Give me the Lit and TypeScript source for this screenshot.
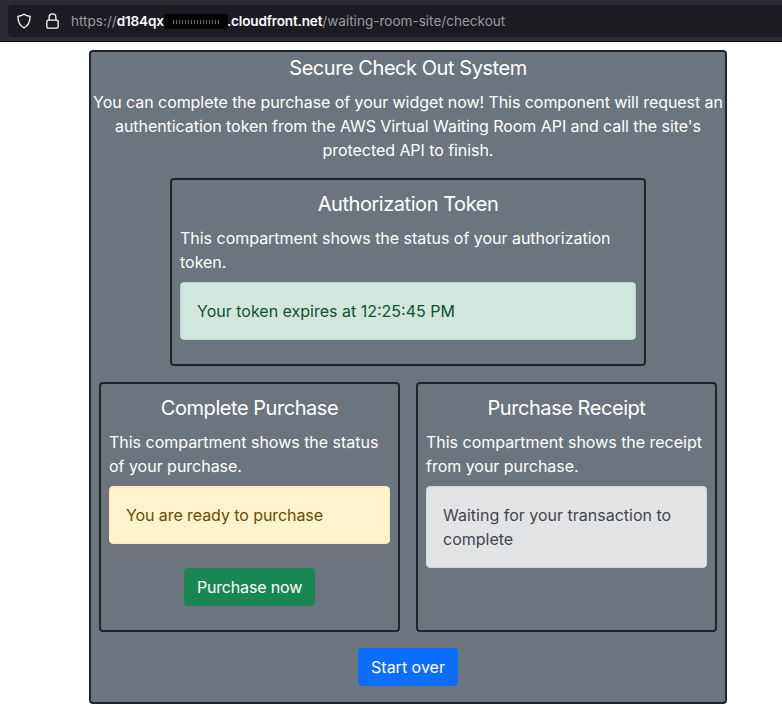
import { LitElement, html, css } from "lit";
import { customElement } from "lit/decorators.js";

@customElement("app-root")
export class AppRoot extends LitElement {
  static styles = css`
    :host { display: block; font-family: Inter, "Liberation Sans", sans-serif; font-size: 16px; line-height: 24px; color: #fff; background: #fff; min-height: 725px; }
    * { box-sizing: border-box; }
    .chrome { height: 42px; background: #2b2a33; border-bottom: 1px solid #0c0c0d; padding: 5px 0 4px 8px; }
    .urlbar { height: 32px; background: #1c1b22; border-radius: 4px 0 0 4px; display: flex; align-items: center; padding-left: 8px; color: #9a9aa0; font-size: 13.55px; }
    .urlbar svg { flex: none; }
    .lock { margin-left: 14px; margin-right: 12px; }
    .host { color: #fbfbfe; font-weight: 600; letter-spacing: -0.16px; }
    .redact { display: inline-block; width: 64px; height: 15px; margin-left: -4px; margin-right: -1px; border-radius: 3px; vertical-align: -3px; background: repeating-linear-gradient(90deg, #6a6a6a 0 1px, #0a0a0a 1px 3px) center / 46px 4px no-repeat, #050505; }
    .page { width: 638px; margin: 8px 0 0 89px; }
    .box { border: 2px solid #212529; border-radius: 4px; background: #6c757d; }
    .outer { height: 654px; text-align: center; }
    h5 { margin: 0 0 6px; font-size: 20px; font-weight: 400; line-height: 32px; letter-spacing: -0.45px; text-align: center; }
    p { margin: 0 0 16px; }
    .intro { letter-spacing: -0.06px; }
    .inner { padding: 8px; text-align: left; }
    .inner p { margin-bottom: 8px; letter-spacing: -0.02px; }
    .auth { width: 476px; height: 188px; margin: 0 auto 16px; }
    .row { display: flex; gap: 16px; margin: 0 8px 16px; }
    .row .inner { flex: 1 1 0; height: 250px; }
    .alert { border: 1px solid transparent; border-radius: 4px; padding: 16px; }
    .success { color: #0f5132; background: #d1e7dd; border-color: #badbcc; }
    .warning { color: #664d03; background: #fff3cd; border-color: #ffecb5; letter-spacing: -0.08px; }
    .secondary { color: #41464b; background: #e2e3e5; border-color: #d3d6d8; }
    .center { text-align: center; margin-top: 24px; }
    button { font: inherit; color: #fff; border: 1px solid transparent; border-radius: 4px; padding: 6px 12px; height: 38px; display: inline-block; }
    .green { background: #198754; letter-spacing: -0.16px; }
    .blue { background: #0d6efd; }
  `;

  render() {
    return html`
      <div class="chrome">
        <div class="urlbar">
          <svg width="16" height="16" viewBox="0 0 16 16" fill="none" stroke="#fbfbfe" stroke-width="1.3"><path d="M8 1.2 C6 2.6 4 3.1 1.9 3.3 C1.9 8 3 12.4 8 14.9 C13 12.4 14.1 8 14.1 3.3 C12 3.1 10 2.6 8 1.2 Z"/></svg>
          <svg class="lock" width="13" height="16" viewBox="0 0 13 16" fill="none" stroke="#fbfbfe" stroke-width="1.3"><rect x="0.8" y="7.2" width="11.4" height="8" rx="1.6"/><path d="M3.1 7V4.2a3.4 3.4 0 0 1 6.8 0V7"/></svg>
          <span>https://<span class="host">d184qx.<span class="redact"></span>.cloudfront.net</span>/waiting-room-site/checkout</span>
        </div>
      </div>
      <div class="page">
        <div class="box outer">
          <h5>Secure Check Out System</h5>
          <p class="intro">You can complete the purchase of your widget now! This component will request an authentication token from the AWS Virtual Waiting Room API and call the site's protected API to finish.</p>
          <div class="box inner auth">
            <h5>Authorization Token</h5>
            <p>This compartment shows the status of your authorization token.</p>
            <div class="alert success">Your token expires at 12:25:45 PM</div>
          </div>
          <div class="row">
            <div class="box inner">
              <h5>Complete Purchase</h5>
              <p>This compartment shows the status of your purchase.</p>
              <div class="alert warning">You are ready to purchase</div>
              <div class="center"><button class="green">Purchase now</button></div>
            </div>
            <div class="box inner">
              <h5>Purchase Receipt</h5>
              <p>This compartment shows the receipt from your purchase.</p>
              <div class="alert secondary">Waiting for your transaction to complete</div>
            </div>
          </div>
          <button class="blue">Start over</button>
        </div>
      </div>
    `;
  }
}
